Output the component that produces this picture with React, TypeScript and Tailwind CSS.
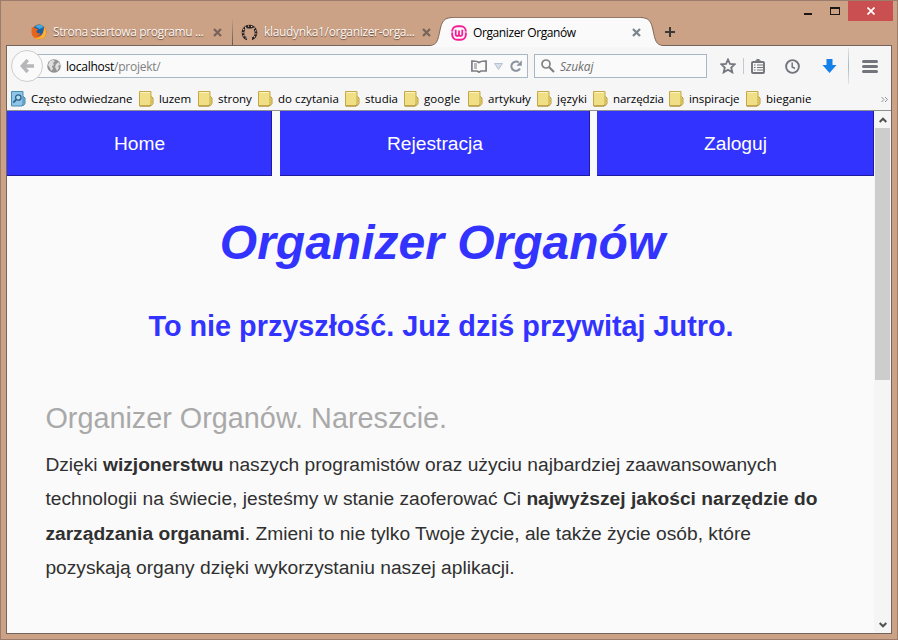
import type { ReactNode } from "react";

const uiFont = "font-['Open_Sans','Noto_Sans',sans-serif]";
const pageFont = "font-['Liberation_Sans',Arial,sans-serif]";

const bookmarks = [
  { label: "luzem", box: "w-[59px]", text: "tracking-[-0.1px]" },
  { label: "strony", box: "w-[60px]", text: "tracking-[-0.05px]" },
  { label: "do czytania", box: "w-[87px]", text: "tracking-[0.05px]" },
  { label: "studia", box: "w-[59px]", text: "tracking-[0px]" },
  { label: "google", box: "w-[64px]", text: "tracking-[0.1px]" },
  { label: "artykuły", box: "w-[69px]", text: "tracking-[0px]" },
  { label: "języki", box: "w-[56px]", text: "tracking-[0.1px]" },
  { label: "narzędzia", box: "w-[76px]", text: "tracking-[-0.1px]" },
  { label: "inspiracje", box: "w-[77px]", text: "tracking-[-0.1px]" },
  { label: "bieganie", box: "w-[70px]", text: "tracking-[0px]" },
];

function Firefox() {
  return (
    <svg width="16" height="16" viewBox="0 0 16 16" className="shrink-0">
      <circle cx="8" cy="8" r="7.500" fill="#e9641b" />
      <circle cx="8" cy="6" r="5.600" fill="#1f5d9f" />
      <path d="M4.500 2C7 .3 11 .3 12.500 2.500 11.500 4 10 4.500 8.500 5 7.500 4.500 6.500 3.500 4.500 3Z" fill="#3fa9dc" />
      <path d="M.8 3C2 4 3 3.600 4.600 4.200 5.400 5 6.900 4.900 7 5.600 6.400 6.600 5.200 6.700 5.400 7.800 5.900 9.700 8.500 9.600 9.800 9 9.300 10.600 7.800 11.200 6.600 11.200 4 12 1 11 .7 8Z" fill="#e9641b" />
      <path d="M13 3C16 6 15.800 11.500 12.500 14 9 16 5 15.500 3 13.500 7 14.500 12.500 13 13 3Z" fill="#f9b233" />
    </svg>
  );
}

function Github() {
  return (
    <svg width="17" height="17" viewBox="0 0 17 17" className="shrink-0">
      <path
        d="M6 16.200C3 15.200.7 12.300.7 8.700.7 4.300 4.200.8 8.500.8S16.300 4.300 16.300 8.700C16.300 12.300 14 15.200 11 16.200V13.500C12.900 12.600 13.700 11 13.700 8.900 13.700 7.600 13.300 6.900 12.900 6.200V3.700C11.600 3.800 11 4.200 10.300 4.500H6.700C6 4.200 5.400 3.800 4.100 3.700V6.200C3.700 6.900 3.300 7.600 3.300 8.900 3.300 11 4.100 12.600 6 13.500Z"
        fill="#2b211d"
      />
      <path d="M5.500 14.300A6.500 6.500 0 1 1 11.500 14.300" fill="none" stroke="#f1e5de" strokeWidth="1.100" strokeDasharray="1.100 2" />
    </svg>
  );
}

function Wamp() {
  return (
    <svg width="16" height="16" viewBox="0 0 16 16" className="shrink-0" fill="none" stroke="#f51d95">
      <rect x="1.200" y="1.200" width="13.600" height="13.600" rx="5" strokeWidth="1.900" />
      <path d="M4.700 4.700V9.500Q4.700 11 6.200 11T8 9.500V5.500M8 9.500Q8 11 9.600 11T11.300 9.500V4.700" strokeWidth="1.800" />
      <path d="M0 7H2.500M13.500 7H16" stroke="#fce3f0" strokeWidth="1" />
    </svg>
  );
}

function TabClose({ color }: { color: string }) {
  return (
    <svg width="9" height="9" viewBox="0 0 9 9" className="shrink-0" stroke={color} strokeWidth="2.300">
      <path d="M1 1 8 8M8 1 1 8" />
    </svg>
  );
}

function Folder() {
  return (
    <svg width="15" height="16" viewBox="0 0 15 16" className="shrink-0">
      <path d="M11 5.500H12.500L14 7V12.500L12.500 14.500H10Z" fill="#ecd873" stroke="#b89c3c" />
      <path d="M.5.500H12V12.500L11 15H.500Z" fill="#f1df85" stroke="#c3a84a" />
      <path d="M1.500 1.500H11" stroke="#fcf4bf" />
      <path d="M1 15H11.500" stroke="#a88c34" />
    </svg>
  );
}

function SmartFolder() {
  return (
    <svg width="15" height="16" viewBox="0 0 15 16" className="shrink-0">
      <path d="M11 5.500H12.500L14 7V12.500L12.500 14.500H10Z" fill="#7fb6da" stroke="#4584ac" />
      <path d="M.5.500H12V12.500L11 15H.500Z" fill="#8ec4e6" stroke="#4a8bb5" />
      <circle cx="7.300" cy="6.500" r="2.700" fill="#b5dcf2" stroke="#28618a" strokeWidth="1.300" />
      <path d="M5.200 8.700 2.300 11.600" stroke="#28618a" strokeWidth="1.700" />
    </svg>
  );
}

function TitleBar() {
  return (
    <div className="flex h-[44px] w-full">
      <div className="mt-[17px] flex h-7 shrink-0 items-center pl-[30px]">
        <Firefox />
        <span className="ml-[6px] w-[152px] whitespace-nowrap text-[12px] tracking-[-0.38px] text-[#fff8f3] [text-shadow:0_1px_1px_#6b4e3e]">
          Strona startowa programu ...
        </span>
        <span className="ml-[8px]"><TabClose color="#77645a" /></span>
        <span className="ml-[10px] h-7 w-px bg-gradient-to-b from-[#cca287] to-[#5c5552]" />
        <span className="ml-[8px]"><Github /></span>
        <span className="ml-[6px] w-[150px] whitespace-nowrap text-[12px] tracking-[-0.33px] text-[#fff8f3] [text-shadow:0_1px_1px_#6b4e3e]">
          klaudynka1/organizer-orga...
        </span>
        <span className="ml-2"><TabClose color="#77645a" /></span>
      </div>
      <div className="z-10 -ml-px mt-4 flex h-[30px] shrink-0">
        <svg width="22" height="30" viewBox="0 0 22 30">
          <path d="M0 28.500C7 28 8 23 10 13C12 4 14 1 22 .500V30H0Z" fill="#fafafa" />
          <path d="M0 28.500C7 28 8 23 10 13C12 4 14 1 22 .500" fill="none" stroke="#806555" />
        </svg>
        <div className="flex h-[30px] w-[189px] items-center border-t border-[#967867] bg-[#fafafa]">
          <span className="-ml-px"><Wamp /></span>
          <span className="ml-[6px] w-[161px] whitespace-nowrap text-[12px] tracking-[-0.4px] text-black">Organizer Organów</span>
          <TabClose color="#7f858f" />
        </div>
        <svg width="22" height="30" viewBox="0 0 22 30">
          <path d="M0 .500C8 1 10 4 12 13C14 23 15 28 22 28.500V30H0Z" fill="#fafafa" />
          <path d="M0 .500C8 1 10 4 12 13C14 23 15 28 22 28.500" fill="none" stroke="#806555" />
        </svg>
      </div>
      <svg width="10" height="10" viewBox="0 0 10 10" className="ml-[2px] mt-[26px] shrink-0" stroke="#3c3836" strokeWidth="2">
        <path d="M0 5H10M5 0V10" />
      </svg>
      <div className="ml-auto mr-1 flex h-5 items-start">
        <span className="mr-[18px] mt-3 h-[2px] w-2 bg-[#1d1713]" />
        <span className="mr-[8px] mt-[6px] h-2 w-[10px] border border-t-2 border-[#1d1713]" />
        <span className="flex h-5 w-[45px] items-center justify-center bg-[#c94f50]">
          <svg width="8" height="8" viewBox="0 0 8 8" stroke="#fff" strokeWidth="1.700">
            <path d="M.5.500 7.500 7.500M7.500.500.500 7.500" />
          </svg>
        </span>
      </div>
    </div>
  );
}

function Toolbar() {
  return (
    <div className="mb-[2px] flex h-[40px] items-center">
      <div className="z-10 ml-1 flex size-8 shrink-0 items-center justify-center rounded-full border border-[#cdcdcf] bg-[#fafafa]">
        <svg width="14" height="14" viewBox="0 0 14 14" fill="none" stroke="#b7b7b9" strokeWidth="3.400">
          <path d="M7.700 1 2.200 7 7.700 13M2.500 7H14" />
        </svg>
      </div>
      <div className="-ml-2 flex h-6 w-[493px] shrink-0 items-center border border-[#a9b7c4] bg-[#fafafa] pl-[11px]">
        <svg width="14" height="14" viewBox="0 0 14 14" className="shrink-0">
          <circle cx="7" cy="7" r="6.800" fill="#939393" />
          <path d="M1 6 3 2 6 1 8 2 6 4 7 6 5 7 6 10 4 12 3 9ZM9 5 12 3 13 6 11 7 12 9 10 12 8 8Z" fill="#dedede" />
        </svg>
        <span className="ml-[5px] whitespace-nowrap pt-px text-[12px] tracking-[-0.25px] text-black">
          localhost<span className="text-[#808080]">/projekt/</span>
        </span>
        <div className="ml-auto mr-[5px] flex items-center">
          <svg width="16" height="13" viewBox="0 0 16 13" fill="none" stroke="#7d7d83" strokeWidth="1.700">
            <path d="M8 2.500C6 .8 3 1 .9 1V11H6.200L8 12.200 9.800 11H15.100V1C13 1 10 .8 8 2.500Z" />
            <path d="M3 4H6M3 6H6M3 8H6" strokeWidth="1" />
          </svg>
          <svg width="9" height="7" viewBox="0 0 9 7" className="ml-[7px]">
            <path d="M.5.500H8.500L4.500 6.500Z" fill="#d5dde9" stroke="#b8c3d1" />
          </svg>
          <svg width="12" height="12" viewBox="0 0 12 12" className="ml-[7px]">
            <path d="M8.700 2.500A4.600 4.600 0 1 0 10 8.500" fill="none" stroke="#8b939f" strokeWidth="2" />
            <path d="M11.800.300V5.800H6.300Z" fill="#8b939f" />
          </svg>
        </div>
      </div>
      <div className="ml-[6px] flex h-6 w-[173px] shrink-0 items-center border border-[#a9b7c4] bg-[#fafafa] pl-[6px]">
        <svg width="14" height="14" viewBox="0 0 14 14" fill="none" stroke="#828286">
          <circle cx="5" cy="5" r="4" strokeWidth="1.700" />
          <path d="M8 8 13 13" strokeWidth="2.200" />
        </svg>
        <span className="ml-[5px] pt-px text-[12px] italic tracking-[-0.1px] text-[#6e6e6e]">Szukaj</span>
      </div>
      <svg width="16" height="16" viewBox="0 0 16 16" className="ml-[13px] shrink-0" fill="none" stroke="#73747c" strokeWidth="1.800">
        <path d="M8 1.500 10 6 14.700 6.300 11.200 9.500 12.300 14.300 8 11.700 3.700 14.300 4.800 9.500 1.300 6.300 6 6Z" />
      </svg>
      <span className="ml-[7px] h-4 w-px bg-[#c5c9cf]" />
      <svg width="14" height="15" viewBox="0 0 14 15" className="ml-[7px] shrink-0" fill="none" stroke="#73747c">
        <rect x="1" y="3" width="12" height="11" rx="1" strokeWidth="1.900" />
        <path d="M4 2.500H10M5.500 1H8.500" strokeWidth="2" />
        <path d="M3 6H4.500M6 6H12M3 8.500H4.500M6 8.500H12M3 11H4.500M6 11H12" strokeWidth="1.200" />
      </svg>
      <svg width="15" height="15" viewBox="0 0 15 15" className="ml-[20px] shrink-0" fill="none" stroke="#73747c">
        <circle cx="7.500" cy="7.500" r="6.400" strokeWidth="1.900" />
        <path d="M7.200 3.500V8L10 9.500" strokeWidth="1.500" />
      </svg>
      <svg width="15" height="14" viewBox="0 0 15 14" className="ml-[22px] shrink-0">
        <path d="M4.500 0H10.500V6H14.500L7.500 14 .5 6H4.500Z" fill="#1580e8" />
      </svg>
      <span className="ml-[11px] h-9 w-px bg-gradient-to-b from-[#e3e6ea] via-[#aab6c3] to-[#e3e6ea]" />
      <div className="ml-[13px] flex flex-col gap-[2px]">
        <span className="h-[3px] w-4 rounded-full bg-[#73747c]" />
        <span className="h-[3px] w-4 rounded-full bg-[#73747c]" />
        <span className="h-[3px] w-4 rounded-full bg-[#73747c]" />
      </div>
    </div>
  );
}

function BookmarkBar() {
  return (
    <div className="flex h-[23px] items-center whitespace-nowrap border-b border-[#8f9092] pl-1 text-[11.500px] text-black">
      <div className="flex w-[128px] shrink-0 items-center">
        <SmartFolder />
        <span className="ml-[5px] tracking-[-0.1px]">Często odwiedzane</span>
      </div>
      {bookmarks.map((b) => (
        <div key={b.label} className={`flex shrink-0 items-center ${b.box}`}>
          <Folder />
          <span className={`ml-[5px] ${b.text}`}>{b.label}</span>
        </div>
      ))}
      <svg width="7" height="5" viewBox="0 0 7 5" className="ml-auto mr-[3px]" fill="none" stroke="#8b8f95">
        <path d="M.5 0 3 2.500.500 5M4 0 6.500 2.500 4 5" />
      </svg>
    </div>
  );
}

function NavItem({ className, children }: { className: string; children: ReactNode }) {
  return (
    <a className={`flex h-[65px] items-center justify-center border-b border-r border-[#1c1c9c] bg-[#3333ff] pl-px pt-[2px] text-[19.200px] text-white ${className}`}>
      {children}
    </a>
  );
}

function Page() {
  return (
    <main className={`w-[867px] shrink-0 bg-[#fafafa] ${pageFont}`}>
      <nav className="flex">
        <NavItem className="w-[265px]">Home</NavItem>
        <NavItem className="ml-2 w-[310px]">Rejestracja</NavItem>
        <NavItem className="ml-[7px] w-[277px]">Zaloguj</NavItem>
      </nav>
      <h1 className="mt-[43px] pl-[4px] text-center text-[48px] font-bold italic leading-[48px] text-[#3333ff]">Organizer Organów</h1>
      <h2 className="mt-[43px] pl-px text-center text-[28.800px] font-bold leading-8 text-[#3333ff]">
        To nie przyszłość. Już dziś przywitaj Jutro.
      </h2>
      <h3 className="mt-[60px] pl-[38.400px] text-[28.800px] leading-8 text-[#a9a9a9]">Organizer Organów. Nareszcie.</h3>
      <p className="mt-[13.800px] whitespace-nowrap pl-[38.400px] text-[19.200px] leading-[34.560px] text-[#303030]">
        Dzięki <b>wizjonerstwu</b> naszych programistów oraz użyciu najbardziej zaawansowanych
        <br />
        technologii na świecie, jesteśmy w stanie zaoferować Ci <b>najwyższej jakości narzędzie do</b>
        <br />
        <b>zarządzania organami</b>. Zmieni to nie tylko Twoje życie, ale także życie osób, które
        <br />
        pozyskają organy dzięki wykorzystaniu naszej aplikacji.
      </p>
    </main>
  );
}

function Scrollbar() {
  return (
    <div className="flex w-[18px] flex-col items-center bg-[#f5f5f5]">
      <span className="flex h-[17px] items-center">
        <svg width="8" height="6" viewBox="0 0 8 6" fill="none" stroke="#505050" strokeWidth="2">
          <path d="M.7 5 4 1.700 7.300 5" />
        </svg>
      </span>
      <span className="h-[252px] w-[15px] bg-[#cdcdcd]" />
      <span className="mt-auto flex h-[16px] items-center">
        <svg width="8" height="6" viewBox="0 0 8 6" fill="none" stroke="#505050" strokeWidth="2">
          <path d="M.7 1 4 4.300 7.300 1" />
        </svg>
      </span>
    </div>
  );
}

export default function App() {
  return (
    <div className={`flex h-[640px] w-[898px] flex-col overflow-hidden border border-[#9c7c6b] bg-[#cca287] ${uiFont}`}>
      <TitleBar />
      <div className="mx-[5px] flex h-[589px] shrink-0 flex-col border border-[#75645b] bg-[#f6f6f7]">
        <Toolbar />
        <BookmarkBar />
        <div className="flex min-h-0 flex-1">
          <Page />
          <Scrollbar />
        </div>
      </div>
    </div>
  );
}
